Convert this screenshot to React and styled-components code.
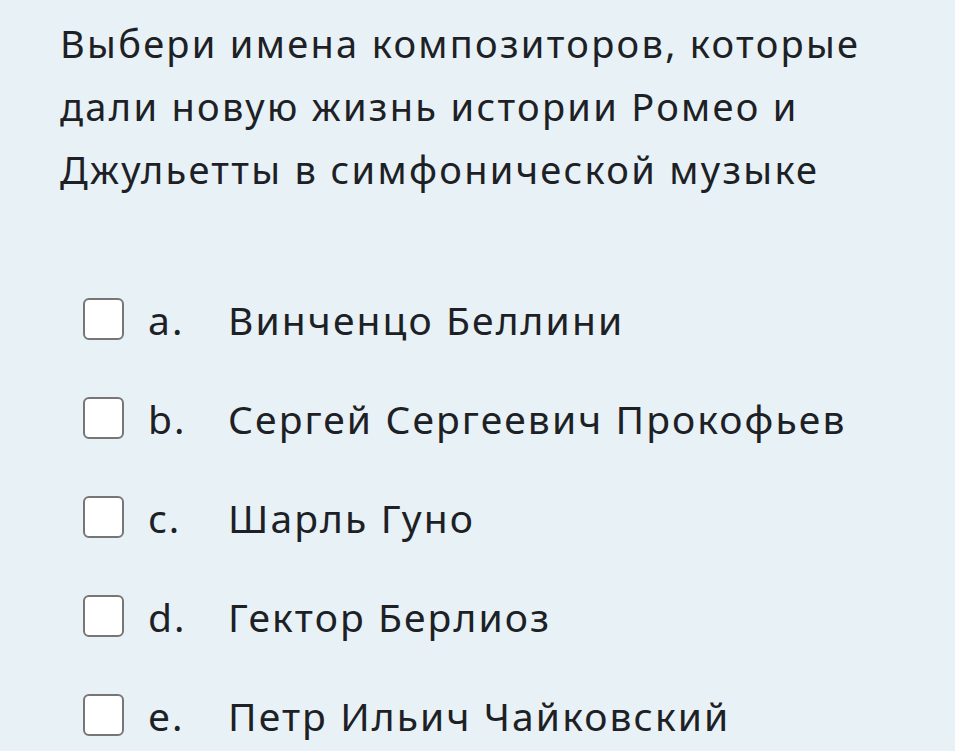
import React from 'react'
import styled, { createGlobalStyle } from 'styled-components';

const options = [
    { letter: 'a.', name: 'Винченцо Беллини' },
    { letter: 'b.', name: 'Сергей Сергеевич Прокофьев' },
    { letter: 'c.', name: 'Шарль Гуно' },
    { letter: 'd.', name: 'Гектор Берлиоз' },
    { letter: 'e.', name: 'Петр Ильич Чайковский' },
];

const App = () => {
    return (
        <Container>
            <GlobalStyle />
            <Question>
                Выбери имена композиторов, которые дали новую жизнь истории Ромео и Джульетты в симфонической музыке
            </Question>
            <OptionList>
                {options.map((o) => (
                    <Option key={o.letter}>
                        <Checkbox type="checkbox" />
                        <Letter>{o.letter}</Letter>
                        <Name>{o.name}</Name>
                    </Option>
                ))}
            </OptionList>
        </Container>
    )
}

export default App;

const GlobalStyle = createGlobalStyle`
    body {
        margin: 0;
        background: #e7f1f6;
    }
`;

const Container = styled.div`
    width: 955px;
    height: 751px;
    overflow: hidden;
    background: #e7f1f6;
    font-family: "Noto Sans", sans-serif;
    color: #1d2125;
    padding: 12px 0 0 60px;
    box-sizing: border-box;
`;

const Question = styled.div`
    font-size: 38px;
    letter-spacing: 2.3px;
    line-height: 63px;
    width: 840px;
`;

const OptionList = styled.div`
    display: flex;
    flex-direction: column;
    gap: 57px;
    margin-top: 97px;
    padding-left: 23px;
`;

const Option = styled.label`
    display: flex;
    align-items: center;
    height: 42px;
    font-size: 39px;
    letter-spacing: 2.1px;
`;

const Checkbox = styled.input`
    appearance: none;
    margin: 0;
    width: 41px;
    height: 42px;
    box-sizing: border-box;
    border: 2.5px solid #767676;
    border-radius: 6px;
    background: #fff;
    flex-shrink: 0;
`;

const Letter = styled.span`
    width: 80px;
    margin-left: 24px;
`;

const Name = styled.span``;
